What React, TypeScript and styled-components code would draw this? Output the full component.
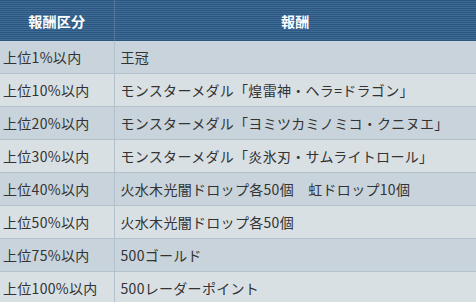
import React from "react";
import styled, { createGlobalStyle } from "styled-components";

const GlobalStyle = createGlobalStyle`
  html, body {
    margin: 0;
    padding: 0;
    background: #ffffff;
    overflow: hidden;
  }
`;

const rewards = [
  { rank: "上位1%以内", reward: "王冠" },
  { rank: "上位10%以内", reward: "モンスターメダル「煌雷神・ヘラ=ドラゴン」" },
  { rank: "上位20%以内", reward: "モンスターメダル「ヨミツカミノミコ・クニヌエ」" },
  { rank: "上位30%以内", reward: "モンスターメダル「炎氷刃・サムライトロール」" },
  { rank: "上位40%以内", reward: "火水木光闇ドロップ各50個　虹ドロップ10個" },
  { rank: "上位50%以内", reward: "火水木光闇ドロップ各50個" },
  { rank: "上位75%以内", reward: "500ゴールド" },
  { rank: "上位100%以内", reward: "500レーダーポイント" },
];

function App() {
  return (
    <>
      <GlobalStyle />
      <Table>
        <thead>
          <tr>
            <Th $width={114}>報酬区分</Th>
            <Th>報酬</Th>
          </tr>
        </thead>
        <tbody>
          {rewards.map((r, i) => (
            <Row key={r.rank} $odd={i % 2 === 0}>
              <Td $first>{r.rank}</Td>
              <Td>{r.reward}</Td>
            </Row>
          ))}
        </tbody>
      </Table>
    </>
  );
}

export default App;

const Table = styled.table`
  width: 476px;
  border-collapse: collapse;
  table-layout: fixed;
  font-family: "Noto Sans CJK JP", "Noto Sans", sans-serif;
  font-size: 14px;
  letter-spacing: 0.3px;
  color: #333333;
`;

const Th = styled.th<{ $width?: number }>`
  ${(p) => (p.$width ? `width: ${p.$width}px;` : "")}
  height: 41px;
  padding: 0;
  box-sizing: border-box;
  color: #ffffff;
  font-weight: bold;
  text-align: center;
  background: repeating-linear-gradient(
    to bottom,
    #2a5680 0px,
    #2a5680 1px,
    #3e6c96 1px,
    #3e6c96 2px
  );
  border-right: 1px solid #56799a;
  &:last-child {
    border-right: none;
  }
`;

const Row = styled.tr<{ $odd: boolean }>`
  background: ${(p) => (p.$odd ? "#c8d3db" : "#d9e0e4")};
  border-top: 1px solid #b3c1cd;
  &:first-child {
    border-top: none;
  }
  &:first-child td {
    height: 32px;
  }
`;

const Td = styled.td<{ $first?: boolean }>`
  height: 33px;
  padding: 0 0 0 ${(p) => (p.$first ? "3px" : "6px")};
  box-sizing: border-box;
  white-space: nowrap;
  overflow: hidden;
  border-right: ${(p) => (p.$first ? "1px solid #b3c1cd" : "none")};
  line-height: 1;
`;
